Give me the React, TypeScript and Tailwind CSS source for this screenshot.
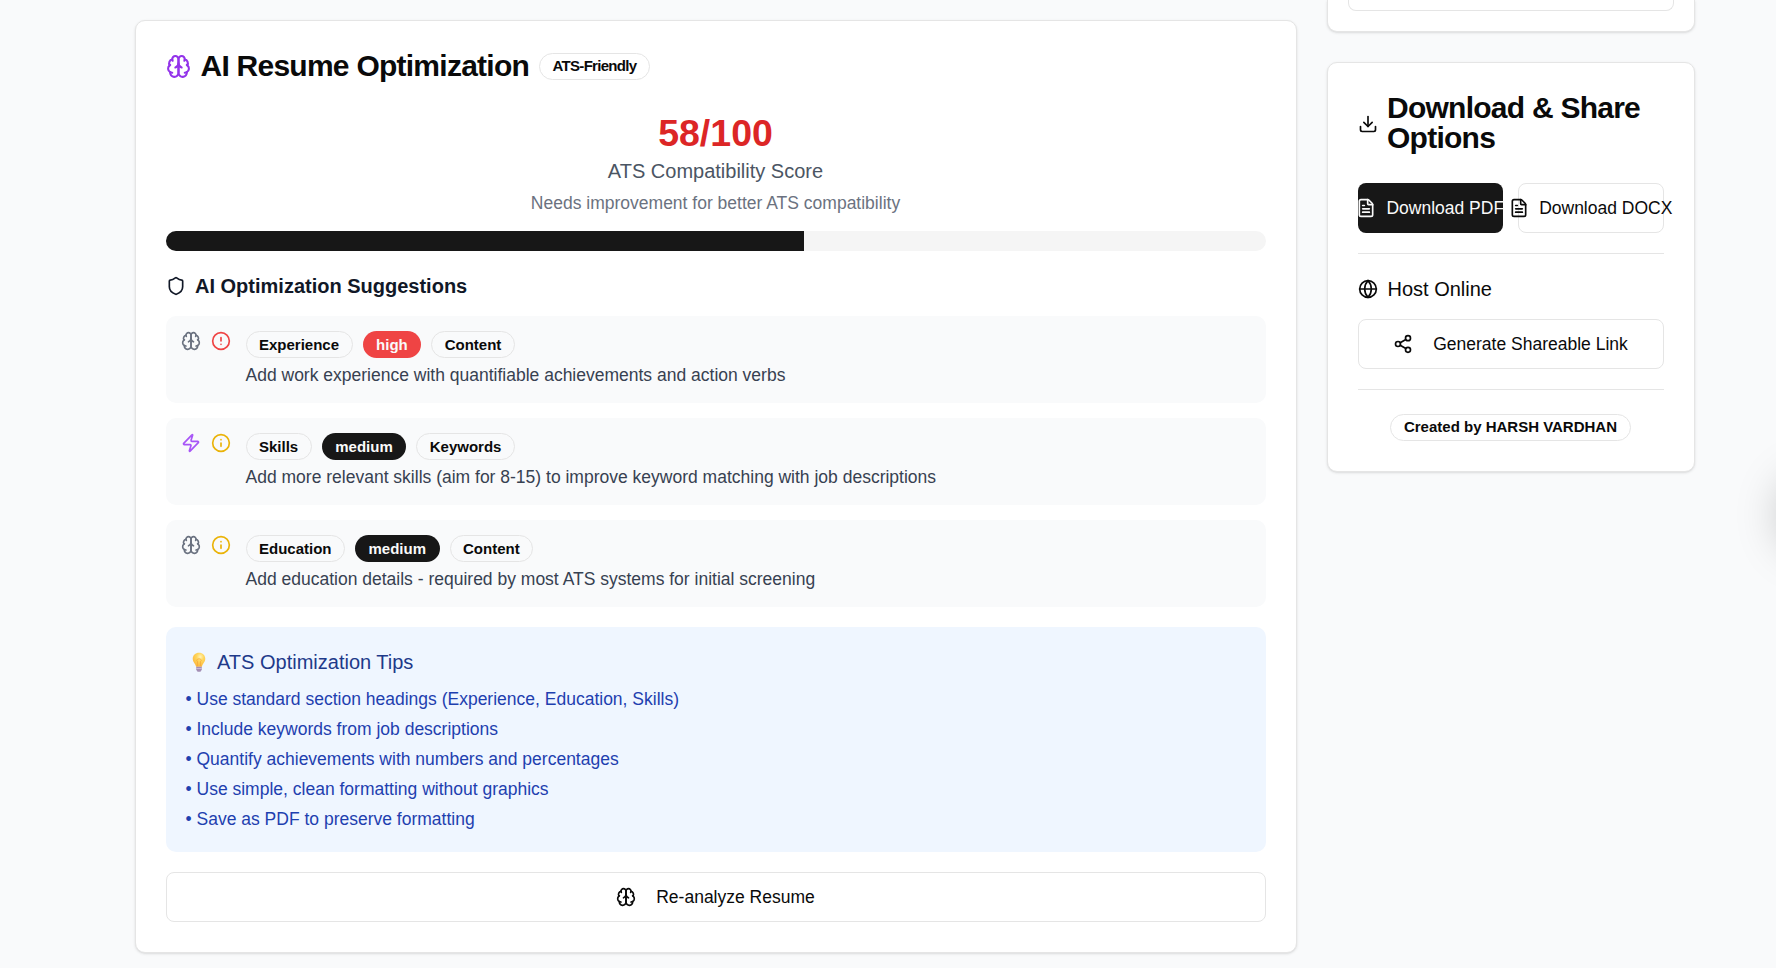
import type { ReactNode } from "react";
import { CircleAlert, Download, FileText, Globe, Info, Share2, Shield, Zap } from "lucide-react";

function Brain({ className }: { className?: string }) {
  return (
    <svg viewBox="0 0 24 24" fill="none" stroke="currentColor" strokeWidth={2} strokeLinecap="round" strokeLinejoin="round" className={className}>
      <path d="M12 5a3 3 0 1 0-5.997.125 4 4 0 0 0-2.526 5.77 4 4 0 0 0 .556 6.588A4 4 0 1 0 12 18Z" />
      <path d="M12 5a3 3 0 1 1 5.997.125 4 4 0 0 1 2.526 5.77 4 4 0 0 1-.556 6.588A4 4 0 1 1 12 18Z" />
      <path d="M15 13a4.5 4.5 0 0 1-3-4 4.5 4.5 0 0 1-3 4" />
      <path d="M17.599 6.5a3 3 0 0 0 .399-1.375" />
      <path d="M6.003 5.125A3 3 0 0 0 6.401 6.5" />
      <path d="M3.477 10.896a4 4 0 0 1 .585-.396" />
      <path d="M19.938 10.5a4 4 0 0 1 .585.396" />
      <path d="M6 18a4 4 0 0 1-1.967-.516" />
      <path d="M19.967 17.484A4 4 0 0 1 18 18" />
    </svg>
  );
}

function Badge({ children, tone = "outline" }: { children: ReactNode; tone?: "outline" | "high" | "medium" }) {
  const tones = {
    outline: "border-[#e5e5e5] text-[#0a0a0a]",
    high: "border-transparent bg-[#ef4444] text-[#fafafa]",
    medium: "border-transparent bg-[#171717] text-[#fafafa]",
  };
  return (
    <div className={`inline-flex h-[27px] items-center whitespace-nowrap rounded-full border px-[12.5px] text-[15px] leading-5 font-semibold ${tones[tone]}`}>
      {children}
    </div>
  );
}

const suggestions = [
  { kind: "brain", section: "Experience", level: "high", area: "Content", text: "Add work experience with quantifiable achievements and action verbs" },
  { kind: "zap", section: "Skills", level: "medium", area: "Keywords", text: "Add more relevant skills (aim for 8-15) to improve keyword matching with job descriptions" },
  { kind: "brain", section: "Education", level: "medium", area: "Content", text: "Add education details - required by most ATS systems for initial screening" },
] as const;

const tips = [
  "Use standard section headings (Experience, Education, Skills)",
  "Include keywords from job descriptions",
  "Quantify achievements with numbers and percentages",
  "Use simple, clean formatting without graphics",
  "Save as PDF to preserve formatting",
];

function Bulb() {
  return (
    <svg viewBox="0 0 26 26" className="h-[22px] w-[26px]">
      <defs>
        <radialGradient id="glass" cx="0.6" cy="0.3" r="0.7">
          <stop offset="0" stopColor="#fff3b8" />
          <stop offset="0.4" stopColor="#ffd75e" />
          <stop offset="1" stopColor="#fbb83c" />
        </radialGradient>
      </defs>
      <path d="M13 2C8.700 2 5.600 5.100 5.600 9.100c0 4.100 3.200 5.500 3.900 9.400h7c.7-3.900 3.900-5.300 3.900-9.400C20.400 5.100 17.300 2 13 2Z" fill="url(#glass)" />
      <path d="M11.300 18v-5.500c-2-1.500-.5-3.200 1.700-3.200s3.700 1.700 1.700 3.200V18" fill="none" stroke="#f5a83a" strokeWidth="1" />
      <path d="M9.700 18.500h6.600v3.700l-1.600 2.300h-3.400l-1.600-2.300Z" fill="#a48fb5" />
      <path d="M9.700 20.700h6.600" stroke="#d6c7df" strokeWidth="0.9" />
    </svg>
  );
}

function OptimizationCard() {
  return (
    <section className="h-[933px] w-[1162px] shrink-0 rounded-[10px] border border-[#e5e5e5] bg-white px-[30px] pt-[30px] shadow-sm">
      <header className="flex h-[30px] items-center gap-2.5">
        <Brain className="size-[25px] text-[#9333ea]" />
        <h2 className="text-[30px] leading-[30px] font-semibold tracking-[-0.75px] text-[#0a0a0a]">AI Resume Optimization</h2>
        <div className="flex tracking-[-0.7px]"><Badge>ATS-Friendly</Badge></div>
      </header>

      <div className="mt-[30px] text-center">
        <div className="text-[37.5px] leading-[45px] font-bold text-[#dc2626]">58/100</div>
        <div className="text-[20px] leading-[30px] text-[#4b5563]">ATS Compatibility Score</div>
        <div className="mt-[5px] text-[17.5px] leading-[25px] text-[#6b7280]">Needs improvement for better ATS compatibility</div>
      </div>
      <div className="mt-[15px] h-5 overflow-hidden rounded-full bg-[#f5f5f5]">
        <div className="h-full w-[58%] bg-[#171717]" />
      </div>

      <h3 className="mt-5 flex h-[30px] items-center gap-[9.5px] text-[20px] font-semibold text-[#111827]">
        <Shield className="size-5" />
        AI Optimization Suggestions
      </h3>
      <div className="mt-[15px] flex flex-col gap-[15px]">
        {suggestions.map((s) => (
          <div key={s.section} className="flex h-[87px] gap-[15px] rounded-[10px] bg-[#f9fafb] p-[15px]">
            <div className="flex h-5 gap-2.5">
              {s.kind === "brain" ? <Brain className="size-5 text-[#6b7280]" /> : <Zap className="size-5 text-[#a855f7]" />}
              {s.level === "high" ? <CircleAlert className="size-5 text-[#ef4444]" /> : <Info className="size-5 text-[#eab308]" />}
            </div>
            <div>
              <div className="flex gap-2.5">
                <Badge>{s.section}</Badge>
                <Badge tone={s.level}>{s.level}</Badge>
                <Badge>{s.area}</Badge>
              </div>
              <p className="mt-[5px] text-[17.5px] leading-[25px] text-[#374151]">{s.text}</p>
            </div>
          </div>
        ))}
      </div>

      <div className="mt-5 h-[225px] rounded-[10px] bg-[#eff6ff] p-5">
        <h4 className="flex h-[30px] items-center gap-[5.5px] text-[20px] text-[#1e3a8a]">
          <Bulb />
          ATS Optimization Tips
        </h4>
        <ul className="mt-2.5 flex flex-col gap-[5px] text-[17.5px] leading-[25px] text-[#1e40af]">
          {tips.map((t) => <li key={t}>• {t}</li>)}
        </ul>
      </div>

      <button className="mt-5 flex h-[50px] w-full items-center justify-center gap-5 rounded-[8px] border border-[#e5e5e5] text-[17.5px] text-[#0a0a0a]">
        <Brain className="size-5" />
        Re-analyze Resume
      </button>
    </section>
  );
}

function DownloadCard() {
  return (
    <section className="mt-[30px] h-[410px] rounded-[10px] border border-[#e5e5e5] bg-white p-[30px] text-[#0a0a0a] shadow-sm">
      <h2 className="flex items-center gap-[9.5px] text-[30px] leading-[30px] font-semibold tracking-[-0.75px]">
        <Download className="mt-px size-5 shrink-0" />
        <span>Download &amp; Share Options</span>
      </h2>
      <div className="mt-[30px] grid grid-cols-2 gap-[15px] text-[17.5px]">
        <button className="flex h-[50px] min-w-0 items-center justify-center gap-2.5 whitespace-nowrap rounded-[8px] bg-[#171717] text-[#fafafa]">
          <FileText className="size-5 shrink-0" />
          Download PDF
        </button>
        <button className="flex h-[50px] min-w-0 items-center justify-center gap-2.5 whitespace-nowrap rounded-[8px] border border-[#e5e5e5]">
          <FileText className="size-5 shrink-0" />
          Download DOCX
        </button>
      </div>
      <div className="mt-5 h-px bg-[#e5e5e5]" />
      <h3 className="mt-5 flex h-[30px] items-center gap-2.5 text-[20px]">
        <Globe className="size-5" />
        Host Online
      </h3>
      <button className="mt-[15px] flex h-[50px] w-full items-center justify-center gap-5 rounded-[8px] border border-[#e5e5e5] text-[17.5px]">
        <Share2 className="size-5" />
        Generate Shareable Link
      </button>
      <div className="mt-5 h-px bg-[#e5e5e5]" />
      <div className="mt-6 flex justify-center">
        <Badge><span className="pb-0.5">Created by HARSH VARDHAN</span></Badge>
      </div>
    </section>
  );
}

export default function App() {
  return (
    <main className="relative h-[968px] w-[1776px] overflow-hidden bg-[#f9fafb] font-['Liberation_Sans',Arial,sans-serif]">
      <div className="flex gap-[30px] pl-[134.5px]">
        <div className="pt-5"><OptimizationCard /></div>
        <aside className="w-[368px] shrink-0">
          <section className="h-8 rounded-b-[10px] border border-t-0 border-[#e5e5e5] bg-white px-5 pb-5 shadow-sm">
            <div className="h-[11px] rounded-b-[8px] border border-t-0 border-[#e5e5e5]" />
          </section>
          <DownloadCard />
        </aside>
      </div>
      <div className="absolute top-[477px] left-[1781px] size-[75px] rounded-full shadow-[0_0_46px_rgba(0,0,0,0.25)]" />
    </main>
  );
}
